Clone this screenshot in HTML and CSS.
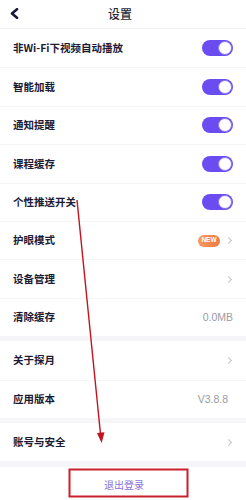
FILE: index.html
```html
<!DOCTYPE html>
<html lang="zh">
<head>
<meta charset="utf-8">
<link rel="stylesheet" href="styles.css">
</head>
<body>
<div class="page">
  <header class="header">
    <span class="back">
      <svg width="11" height="11" viewBox="0 0 11 11"><path d="M8 1.2 L3 5.5 L8 9.8" fill="none" stroke="#1b1a3a" stroke-width="2.6" stroke-linecap="round" stroke-linejoin="round"/></svg>
    </span>
    <h1 class="title">设置</h1>
    <span></span>
  </header>

  <section class="section">
    <div class="row"><span class="label">非Wi-Fi下视频自动播放</span><span class="toggle"><span class="knob"></span></span></div>
    <div class="row"><span class="label">智能加载</span><span class="toggle"><span class="knob"></span></span></div>
    <div class="row"><span class="label">通知提醒</span><span class="toggle"><span class="knob"></span></span></div>
    <div class="row"><span class="label">课程缓存</span><span class="toggle"><span class="knob"></span></span></div>
    <div class="row"><span class="label">个性推送开关</span><span class="toggle"><span class="knob"></span></span></div>
    <div class="row"><span class="label">护眼模式</span><span class="right"><span class="badge">NEW</span><span class="chev"></span></span></div>
    <div class="row"><span class="label">设备管理</span><span class="right"><span class="chev"></span></span></div>
    <div class="row"><span class="label">清除缓存</span><span class="value">0.0MB</span></div>
  </section>

  <section class="section">
    <div class="row"><span class="label">关于探月</span><span class="right"><span class="chev"></span></span></div>
    <div class="row"><span class="label">应用版本</span><span class="value ver">V3.8.8</span></div>
  </section>

  <section class="section">
    <div class="row"><span class="label">账号与安全</span><span class="right"><span class="chev"></span></span></div>
  </section>

  <section class="logout">
    <span class="logout-text">退出登录</span>
  </section>

  <svg class="annot" width="246" height="500" viewBox="0 0 246 500">
    <line x1="77" y1="200" x2="100.5" y2="434" stroke="#c4121f" stroke-width="1.4"/>
    <path d="M97 433 L104.5 432.3 L101.6 443 Z" fill="#c4121f"/>
    <rect x="69.5" y="469.5" width="118" height="27" fill="none" stroke="#c8202c" stroke-width="2"/>
  </svg>
</div>
</body>
</html>
```

FILE: styles.css
```css
html, body {
  margin: 0;
  padding: 0;
}
body {
  width: 246px;
  height: 500px;
  overflow: hidden;
  background: #f6f6f8;
  font-family: "Noto Sans CJK SC", "Noto Sans", sans-serif;
}
.page {
  position: relative;
  width: 246px;
  height: 500px;
  display: flex;
  flex-direction: column;
}
.header {
  height: 28px;
  border-bottom: 1px solid #f1f1f4;
  background: #fff;
  display: grid;
  grid-template-columns: 24px 1fr 30px;
  align-items: center;
}
.back {
  padding-left: 9px;
  display: flex;
  align-items: center;
  margin-top: -1px;
}
.title {
  margin: 0;
  text-align: center;
  font-size: 12px;
  font-weight: 500;
  color: #2a2a3a;
  line-height: 1;
  margin-top: -1px;
}
.section {
  background: #fff;
  display: flex;
  flex-direction: column;
}
.section + .section {
  margin-top: 5px;
}
.section:first-of-type {
  margin-bottom: 0;
}
.row {
  box-sizing: border-box;
  height: 38.4px;
  padding: 0 13px;
  display: flex;
  align-items: center;
  justify-content: space-between;
}
.row + .row {
  border-top: 1px solid #f6f6f8;
}
.label {
  font-size: 10.5px;
  font-weight: 700;
  color: #1c1b36;
  line-height: 1;
}
.toggle {
  box-sizing: border-box;
  width: 31px;
  height: 16px;
  border-radius: 8px;
  background: #6a4cf1;
  display: flex;
  align-items: center;
  justify-content: flex-end;
  padding-right: 1px;
}
.knob {
  box-sizing: border-box;
  width: 14px;
  height: 14px;
  border-radius: 50%;
  background: #fff;
  border: 1px solid #8d76f4;
}
.right {
  display: flex;
  align-items: center;
  gap: 6px;
}
.badge {
  width: 22px;
  height: 12px;
  border-radius: 6px;
  background: linear-gradient(90deg, #f59a5e, #ef7a44);
  color: #fff;
  font-family: "Liberation Sans", Arial, sans-serif;
  font-size: 6.5px;
  font-weight: 700;
  display: flex;
  align-items: center;
  justify-content: center;
  line-height: 1;
}
.chev {
  width: 4px;
  height: 4px;
  border-top: 1.5px solid #c5c5cd;
  border-right: 1.5px solid #c5c5cd;
  transform: rotate(45deg);
  margin-right: 2px;
}
.value {
  font-family: "Liberation Sans", Arial, sans-serif;
  font-size: 10.5px;
  color: #9a9aa2;
  line-height: 1;
}
.ver {
  margin-right: 5px;
}
.logout {
  margin-top: 6px;
  background: #fff;
  flex: 1;
  display: flex;
  justify-content: center;
  padding-left: 2px;
  padding-top: 13px;
}
.logout-text {
  font-size: 10px;
  color: #8a74d8;
  line-height: 1;
}
.annot {
  position: absolute;
  left: 0;
  top: 0;
  pointer-events: none;
}
```
